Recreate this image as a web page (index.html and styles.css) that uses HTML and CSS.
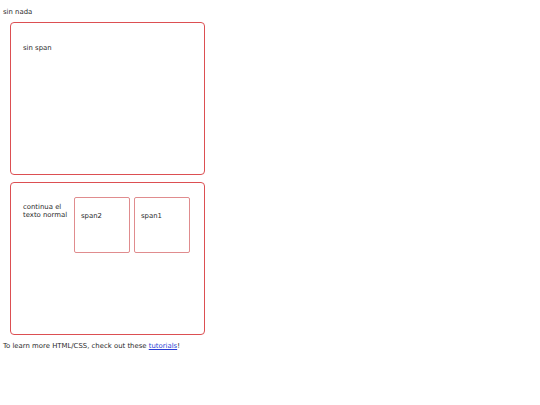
FILE: index.html
```html
<!DOCTYPE html>
<html>
<head>
<meta charset="utf-8">
<link rel="stylesheet" href="styles.css">
</head>
<body>
<p class="line">sin nada</p>
<div class="box">
  <p class="text">sin span</p>
</div>
<div class="box">
  <div class="row">
    <p class="text narrow">continua el texto normal</p>
    <span class="tile">span2</span>
    <span class="tile">span1</span>
  </div>
</div>
<p class="line foot">To learn more HTML/CSS, check out these <a href="#">tutorials</a>!</p>
</body>
</html>
```
FILE: styles.css
```css
html, body {
  margin: 0;
  padding: 0;
  background: #fff;
}
body {
  padding: 3px;
  font-family: "DejaVu Sans", Verdana, sans-serif;
  font-size: 6.9px;
  line-height: 8px;
  color: #2a2a2a;
}
.line {
  margin: 5px 0 0 0;
}
.box {
  margin: 6px 0 0 7px;
  width: 193px;
  height: 151px;
  border: 1.3px solid #dc4f52;
  border-radius: 4px;
  padding: 0;
}
.box + .box {
  margin-top: 7px;
}
.text {
  margin: 21px 0 0 12px;
}
.row {
  display: flex;
  align-items: flex-start;
  margin: 14px 0 0 12px;
  gap: 4px;
}
.row .text {
  margin: 6px 0 0 0;
}
.narrow {
  width: 47px;
  margin-right: 0;
}
.tile {
  display: block;
  box-sizing: border-box;
  width: 56px;
  height: 56px;
  border: 1px solid #e08c8e;
  border-radius: 2px;
  padding: 14px 0 0 6px;
}
.foot {
  margin-top: 7px;
}
a {
  color: #2a3fd6;
}
```
